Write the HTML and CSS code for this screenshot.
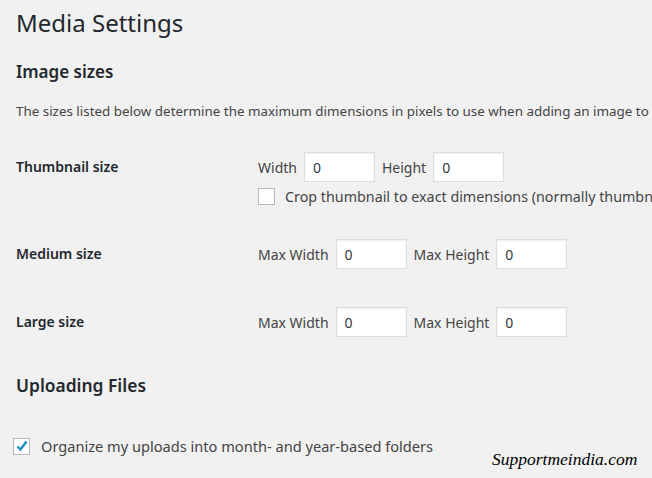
FILE: index.html
```html
<!DOCTYPE html>
<html lang="en">
<head>
  <meta charset="UTF-8">
  <title>Media Settings</title>
  <link rel="stylesheet" href="styles.css">
</head>
<body>
  <div class="wrap">
    <h1 class="page-title">Media Settings</h1>

    <h2 class="section-title">Image sizes</h2>
    <p class="description">The sizes listed below determine the maximum dimensions in pixels to use when adding an image to</p>

    <div class="form-table">
      <div class="row row-thumb">
        <div class="row-label">Thumbnail size</div>
        <div class="row-field">
          <div class="field-line">
            <label class="field-label">Width</label>
            <input type="text" class="size-input" value="0">
            <label class="field-label">Height</label>
            <input type="text" class="size-input" value="0">
          </div>
          <label class="check-line">
            <span class="checkbox"></span>
            <span class="check-text">Crop thumbnail to exact dimensions (normally thumbn</span>
          </label>
        </div>
      </div>

      <div class="row row-medium">
        <div class="row-label">Medium size</div>
        <div class="row-field">
          <div class="field-line">
            <label class="field-label">Max Width</label>
            <input type="text" class="size-input" value="0">
            <label class="field-label">Max Height</label>
            <input type="text" class="size-input" value="0">
          </div>
        </div>
      </div>

      <div class="row row-large">
        <div class="row-label">Large size</div>
        <div class="row-field">
          <div class="field-line">
            <label class="field-label">Max Width</label>
            <input type="text" class="size-input" value="0">
            <label class="field-label">Max Height</label>
            <input type="text" class="size-input" value="0">
          </div>
        </div>
      </div>
    </div>

    <h2 class="section-title uploads-title">Uploading Files</h2>

    <label class="check-line uploads-check">
      <span class="checkbox checked">
        <svg width="14" height="14" viewBox="0 0 14 14"><path d="M2.5 7.5 L5.5 10.5 L11.5 2.5" fill="none" stroke="#1e8cbe" stroke-width="2.4"/></svg>
      </span>
      Organize my uploads into month- and year-based folders
    </label>
  </div>

  <div class="watermark">Supportmeindia.com</div>
</body>
</html>
```

FILE: styles.css
```css
* {
  margin: 0;
  padding: 0;
  box-sizing: border-box;
}

body {
  font-family: "Noto Sans", "Open Sans", sans-serif;
  background-color: #f1f1f1;
  color: #23282d;
  font-size: 14px;
  overflow: hidden;
  height: 478px;
  position: relative;
}

.wrap {
  padding: 0 0 0 16px;
  white-space: nowrap;
  overflow: hidden;
}

.page-title {
  font-size: 24px;
  font-weight: 400;
  line-height: 30px;
  padding-top: 8px;
}

.section-title {
  font-size: 17px;
  font-weight: 600;
  line-height: 24px;
  margin-top: 22px;
}

.description {
  margin-top: 17px;
  font-size: 13.4px;
  line-height: 20px;
  color: #444;
}

.form-table {
  margin-top: 31px;
}

.row {
  display: flex;
}

.row-label {
  flex: none;
  width: 242px;
  font-weight: 600;
  line-height: 30px;
}

.row-field {
  display: flex;
  flex-direction: column;
  min-width: 0;
}

.field-line {
  display: flex;
  align-items: center;
  color: #444;
}

.field-label {
  margin-right: 7px;
}

.size-input {
  width: 71px;
  height: 30px;
  border: 1px solid #ddd;
  background: #fff;
  font-family: inherit;
  font-size: 14px;
  color: #32373c;
  padding: 0 8px;
  margin-right: 7px;
  box-shadow: inset 0 1px 2px rgba(0, 0, 0, 0.07);
}

.check-line {
  display: flex;
  align-items: center;
  color: #444;
  margin-top: 5px;
}

.check-text {
  font-size: 14.3px;
}

.checkbox {
  flex: none;
  width: 17px;
  height: 17px;
  border: 1px solid #b4b9be;
  background: #fff;
  margin-right: 10px;
  display: flex;
  align-items: center;
  justify-content: center;
}

.row-medium {
  margin-top: 33px;
}

.row-large {
  margin-top: 38px;
}

.uploads-title {
  font-size: 17.4px;
  margin-top: 36px;
}

.uploads-check {
  margin-top: 39px;
  margin-left: -3px;
  font-size: 14.6px;
}

.uploads-check .checkbox {
  margin-right: 11px;
}

.watermark {
  position: absolute;
  left: 492px;
  top: 449px;
  font-family: "Liberation Serif", serif;
  font-style: italic;
  font-size: 17.5px;
  color: #000;
}
```
